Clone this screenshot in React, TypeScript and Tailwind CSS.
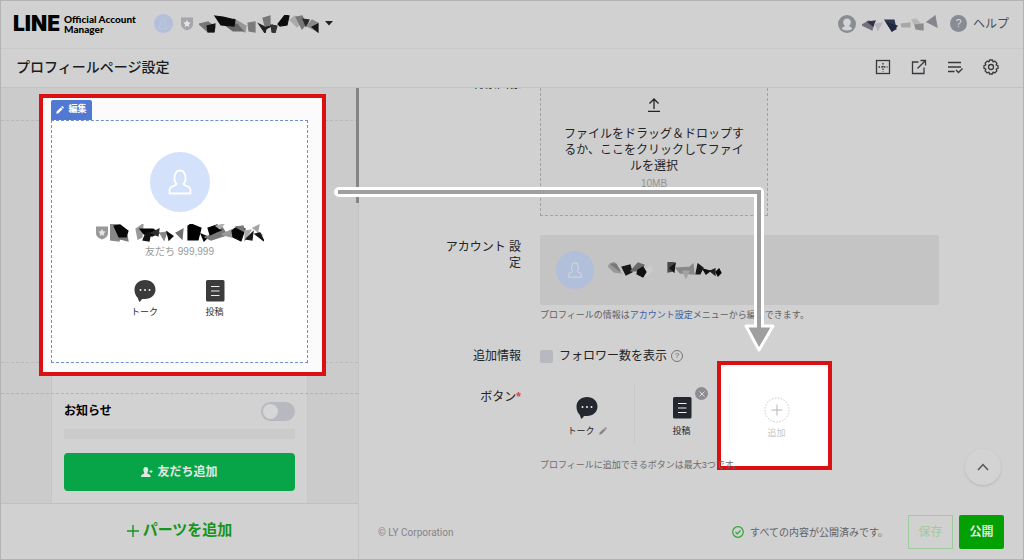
import React from 'react';

interface IconProps {
  className?: string;
}

interface MosaicProps {
  shapes: [string, string][];
  viewBox: string;
  className?: string;
}

interface RowProps {
  label: React.ReactNode;
  className?: string;
  labelClass?: string;
  children: React.ReactNode;
}

const dark = '#0c0c0e';

const headerName: [string, string][] = [
  ['0,9 9,7 16,12 15,17 9,17', '#777'],
  ['9,17 8,11 16,9 15,17', '#151515'],
  ['35,4 37,12 46,17 47,11', '#969696'],
  ['26,10 38,9 44,16 34,16', '#686868'],
  ['16,1 24,2 36,5 35,11 22,10', dark],
  ['49,8 56,7 56,17 50,16', '#7b7b7b'],
  ['60,9 66,12 74,10 67,14 66,18', '#202020'],
  ['64,3 71,1 71,10 66,11', '#777'],
  ['79,9 86,0 90,1 88,10 81,11', dark],
  ['72,10 78,11 76,18 73,17', '#333'],
  ['91,5 96,1 102,8 98,12', '#aaa'],
  ['97,2 103,1 107,9 103,14', '#777'],
  ['104,4 110,5 107,11', '#282828'],
  ['108,11 113,5 119,8 118,16', '#8a8a8a'],
  ['113,12 119,9 119,17', '#181818'],
];

const userName: [string, string][] = [
  ['0,10 7,6 12,8 10,15', '#71717b'],
  ['6,7 13,6 11,11', '#323145'],
  ['13,9 20,8 16,15', '#b5b5bc'],
  ['23,5 32,5 34,14 30,16', '#303651'],
  ['25,8 35,11 30,16', '#20273f'],
  ['39,9 48,8 48,12 40,12', '#a8a8a8'],
  ['50,5 54,4 61,12 53,11', '#b6b6b6'],
  ['53,10 61,9 61,15 54,14', '#8c8c8e'],
  ['65,7 73,1 75,12', '#85858e'],
];

const profileName: [string, string][] = [
  ['0,0 9,1 12,8 9,17 0,16', '#888'],
  ['8,11 17,11 18,17 10,15', '#777'],
  ['4,2 10,1 18,7 16,13 9,13', '#080808'],
  ['26,5 33,0 32,13 28,15', '#999'],
  ['30,5 43,5 49,9 42,12 34,10', '#050505'],
  ['36,9 41,8 39,17 33,16', '#111'],
  ['41,9 49,5 48,12', '#303030'],
  ['50,9 57,8 54,16', '#888'],
  ['57,8 63,12 59,16', dark],
  ['66,9 73,5 72,15', '#717171'],
  ['78,2 81,0 91,4 88,16 78,16', '#000'],
  ['91,10 98,13 94,17', '#050505'],
  ['95,13 107,9 112,3 117,11 101,16', '#777'],
  ['98,4 107,1 111,6 100,11', '#020202'],
  ['106,2 114,0 110,5', '#b0b0b0'],
  ['112,10 126,4 122,13 113,11', '#999'],
  ['122,7 127,3 135,5 131,17 123,13', '#070707'],
  ['126,3 133,2 135,8', '#777'],
  ['135,7 141,6 135,16', '#aaa'],
  ['136,15 143,8 142,16', '#191919'],
  ['143,4 149,1 147,11 152,11', '#a5a5a5'],
  ['145,10 150,9 154,17', '#151515'],
];

const accountName: [string, string][] = [
  ['0,4 6,0 13,11 6,10', '#999'],
  ['3,2 8,2 12,9', '#777'],
  ['14,5 22,3 24,10 18,13', '#171717'],
  ['23,9 30,1 36,3 33,9', '#696969'],
  ['35,10 43,4 44,9 37,15', '#ccc'],
  ['30,8 35,5 38,10 35,15 29,12', '#111'],
  ['60,0 67,1 65,9 60,10', '#484848'],
  ['62,6 67,2 66,10', '#151515'],
  ['68,6 82,5 85,2 86,12 72,11', '#888'],
  ['75,9 81,9 78,16', '#a3a3a3'],
  ['90,2 95,6 92,12 88,12', '#171717'],
  ['95,7 102,9 98,12', '#101010'],
  ['102,9 107,7 107,13', '#202020'],
  ['108,10 111,7 113,11 110,14', '#070707'],
];

function Mosaic({ shapes, viewBox, className }: MosaicProps) {
  return (
    <svg viewBox={viewBox} className={className} aria-hidden="true">
      {shapes.map(([points, fill]) => (
        <polygon key={points} points={points} fill={fill} stroke={fill} strokeWidth="1.2" />
      ))}
    </svg>
  );
}

function PersonIcon({ className }: IconProps) {
  return (
    <svg viewBox="0 0 24 26" className={className} fill="none" stroke="currentColor" strokeWidth="1.8" strokeLinejoin="round">
      <path d="M8.5 15C5 11.500 6 1.500 12 1.500S19 11.500 15.500 15C15 17 22.500 16 22.500 21V24.500H1.500V21C1.500 16 9 17 8.500 15Z" />
    </svg>
  );
}

function ShieldIcon({ className }: IconProps) {
  return (
    <svg viewBox="0 0 13 14" className={className}>
      <path d="M0 0H13V7C13 11 9.500 13 6.500 14C3.500 13 0 11 0 7Z" fill="currentColor" />
      <path d="M6.500 2.500L7.800 5.200 10.500 5.500 8.500 7.500 9 10.200 6.500 9 4 10.200 4.500 7.500 2.500 5.500 5.200 5.200Z" fill="#e5e5e5" />
    </svg>
  );
}

function TalkIcon({ className }: IconProps) {
  return (
    <svg viewBox="0 0 22 22" className={className}>
      <path d="M11 0C17 0 21.500 4 21.500 9.500S17 19 11 19H8.500C7.500 19 7 21 5.500 22C4.500 21 4.500 19 3.500 17.500C1.500 15.500 .5 13 .5 9.500C.5 4 5 0 11 0Z" fill="currentColor" />
      <g fill="#eee">
        <circle cx="6.500" cy="10" r="1" />
        <circle cx="11" cy="10" r="1" />
        <circle cx="15.500" cy="10" r="1" />
      </g>
    </svg>
  );
}

function PostIcon({ className }: IconProps) {
  return (
    <svg viewBox="0 0 22 22" className={className}>
      <rect x="2" y="0" width="18.500" height="21.500" rx="1.500" fill="currentColor" />
      <path d="M7 6.500H15.500M7 11H15.500M7 15.500H15.500" stroke="#eee" strokeWidth="1.200" />
    </svg>
  );
}

function PencilIcon({ className }: IconProps) {
  return (
    <svg viewBox="0 0 10 10" className={className} fill="currentColor">
      <path d="M.8 7L6 1.800 8.200 4 3 9.200.3 9.700ZM6.500 1.300L7.400.4Q8 0 8.600.5L9.500 1.400Q10 2 9.600 2.600L8.700 3.500Z" />
    </svg>
  );
}

function Row({ label, className = '', labelClass = '', children }: RowProps) {
  return (
    <div className={`flex gap-[19px] ${className}`}>
      <div className={`w-20 shrink-0 text-right text-xs leading-4 ${labelClass}`}>{label}</div>
      <div className="min-w-0 flex-1">{children}</div>
    </div>
  );
}

function Header() {
  return (
    <header className="flex h-12 items-center border-b border-[#c9c9c9] pr-3.5 pb-0.5 pl-3">
      <div className="flex items-center gap-1 text-black">
        <span className="font-['Inter'] text-[21px] leading-6 font-black">LINE</span>
        <span className="font-['Lato'] text-[10px] leading-[10px] font-black">
          Official Account
          <br />
          Manager
        </span>
      </div>
      <button type="button" aria-label="アカウント" className="ml-[18px] flex items-center">
        <span className="flex size-[19px] items-center justify-center rounded-full bg-[#b3bfdb]">
          <PersonIcon className="h-2.5 w-3 text-[#c3cde0]" />
        </span>
        <ShieldIcon className="ml-2 h-3.5 w-3 text-[#a6a6aa]" />
        <Mosaic shapes={headerName} viewBox="0 0 120 18" className="ml-1.5 h-[18px] w-[120px]" />
        <svg viewBox="0 0 8 5" className="ml-1.5 h-[5px] w-2">
          <path d="M0 0H8L4 4.500Z" fill="#222" />
        </svg>
      </button>
      <div className="ml-auto flex items-center">
        <svg viewBox="0 0 18 18" className="size-[18px]">
          <circle cx="9" cy="9" r="9" fill="#8a8d91" />
          <path d="M7 11C3.500 7.500 5.500 3.500 9 3.500S14.500 7.500 11 11C11.500 12 14.500 12 14 14Q9 17 4 14C3.500 12 6.500 12 7 11Z" fill="#d4d4d4" />
        </svg>
        <Mosaic shapes={userName} viewBox="0 0 76 18" className="ml-1.5 h-[18px] w-[76px]" />
        <a href="#help" className="ml-3 flex items-center gap-1.5 text-xs text-[#4e4e52]">
          <span className="flex size-[17px] items-center justify-center rounded-full bg-[#898b94] text-[11px] text-[#d8d8d8]">?</span>
          ヘルプ
        </a>
      </div>
    </header>
  );
}

function TitleBar() {
  return (
    <div className="flex h-[39px] items-center border-b border-[#c2c2c2] pr-6 pb-0.5 pl-[15px]">
      <h1 className="text-sm leading-5 font-medium text-[#1c1c1e]">プロフィールページ設定</h1>
      <div className="ml-auto flex items-center gap-5 text-[#36383c]">
        <button type="button" aria-label="グリッド">
          <svg viewBox="0 0 16 16" className="size-4" fill="none" stroke="currentColor" strokeWidth="1.300">
            <rect x="1.500" y="1.500" width="13" height="13" />
            <path d="M8 4V12.500M3.500 8H12.500" strokeDasharray="1.500 1.200" />
          </svg>
        </button>
        <button type="button" aria-label="開く">
          <svg viewBox="0 0 16 16" className="size-4" fill="none" stroke="currentColor" strokeWidth="1.300">
            <path d="M7.500 3H1.500V14.500H13V8.500M6.500 9.500L14 2M9.500 1.500H14.500V6.500" />
          </svg>
        </button>
        <button type="button" aria-label="リスト">
          <svg viewBox="0 0 16 16" className="size-4" fill="none" stroke="currentColor" strokeWidth="1.300">
            <path d="M1 3.500H14M1 8H14M1 12.500H7.500M9 11L11.500 13.500L15.500 9.500" />
          </svg>
        </button>
        <button type="button" aria-label="設定">
          <svg viewBox="0 0 16 16" className="size-4" fill="none" stroke="currentColor" strokeWidth="1.300" strokeLinejoin="round">
            <path d="M6.500 1H9.500L10 2.900L12 2.200L13.900 4.100L13.100 6L15 6.600V9.400L13.100 10L13.900 11.900L12 13.800L10 13.100L9.500 15H6.500L6 13.100L4 13.800L2.100 11.900L2.900 10L1 9.400V6.600L2.900 6L2.100 4.100L4 2.200L6 2.900Z" />
            <circle cx="8" cy="8" r="2.500" />
          </svg>
        </button>
      </div>
    </div>
  );
}

function ProfileCard() {
  return (
    <div className="relative mx-[38px] w-[287px] border-4 border-[#dc0f12] bg-[#fbfbfb] pt-0.5 pr-[14px] pb-[9px] pl-2">
      <button type="button" className="flex h-5 w-[41px] items-center justify-center gap-1 rounded-t-xs bg-[#5179d4] text-[9px] font-bold text-white">
        <PencilIcon className="size-2" />
        編集
      </button>
      <div className="flex h-[243px] flex-col items-center border border-dashed border-[#6d8fce] bg-white pt-[31px]">
        <span className="flex size-[60px] items-center justify-center rounded-full bg-[#d3e1fb]">
          <PersonIcon className="h-[26px] w-6 text-white" />
        </span>
        <div className="mt-3 flex items-center gap-0.5">
          <ShieldIcon className="h-3.5 w-3 text-[#999]" />
          <Mosaic shapes={profileName} viewBox="0 0 154 18" className="h-[18px] w-[154px]" />
        </div>
        <p className="mt-0.5 text-[10px] leading-4 text-[#999]">友だち 999,999</p>
        <div className="mt-5 flex justify-center text-[9px] leading-3 text-[#2c2c2e]">
          <a href="#talk" className="flex w-[70px] flex-col items-center gap-1">
            <TalkIcon className="size-[22px] text-[#3b3b3b]" />
            トーク
          </a>
          <a href="#post" className="flex w-[70px] flex-col items-center gap-1">
            <PostIcon className="size-[22px] text-[#3b3b3b]" />
            投稿
          </a>
        </div>
      </div>
    </div>
  );
}

function Preview() {
  return (
    <aside className="relative flex w-[358px] shrink-0 flex-col border-r border-[#c4c4c4]">
      <div className="relative flex flex-1 flex-col bg-[#cbcbcb] pt-1.5">
        <div className="absolute inset-x-0 top-8 border-t border-dashed border-[#b8b8b8]" />
        <div className="absolute inset-x-0 top-[274px] border-t border-dashed border-[#bababa]" />
        <ProfileCard />
        <div className="mx-[50px] flex flex-1 flex-col border-x border-[#c6c6c6] bg-[#d2d2d2] px-3">
          <label className="mt-[23px] flex h-6 items-center justify-between text-xs font-bold text-black">
            お知らせ
            <input type="checkbox" className="peer sr-only" />
            <span className="flex h-[19px] w-[34px] items-center rounded-full bg-[#b8b8c0] px-0.5">
              <span className="size-[15px] rounded-full bg-[#d6d6d6]" />
            </span>
          </label>
          <div className="mt-1.5 h-2.5 bg-[#cbcbcb]" />
          <button type="button" className="mt-3.5 flex h-[38px] items-center justify-center gap-1 rounded-sm bg-[#08a548] text-xs font-bold text-[#e2e9e2]">
            <svg viewBox="0 0 12 12" className="size-3" fill="currentColor">
              <path d="M4.800 1C6.800 1 7.800 3 7 5C6.500 6.500 6.200 7 6.300 7.500L8.800 8.800Q9.600 9.300 9.600 11H0Q0 9.300 .8 8.800L3.300 7.500C3.400 7 3.100 6.500 2.600 5C1.800 3 2.800 1 4.800 1Z" />
              <path d="M10 4V7M8.500 5.500H11.500" stroke="currentColor" strokeWidth="1" />
            </svg>
            友だち追加
          </button>
        </div>
        <div className="absolute inset-x-0 top-[305px] border-t border-dashed border-[#b3b3b3]" />
      </div>
      <button type="button" className="flex h-14 items-center justify-center gap-1 border-t border-[#c0c0c0] pb-0.5 text-[15px] font-bold text-[#15951a]">
        <svg viewBox="0 0 12 12" className="size-3" stroke="currentColor" strokeWidth="1.400">
          <path d="M6 0V12M0 6H12" />
        </svg>
        パーツを追加
      </button>
      <div className="absolute top-0 -right-px h-[115px] w-[3px] bg-[#858585]" />
    </aside>
  );
}

function ButtonSlots() {
  return (
    <div className="flex h-[58px] text-[9px] leading-3 text-[#1f2024]">
      <button type="button" className="flex w-[95px] flex-col items-center gap-1.5 border-r border-[#c8c8c8] pt-3">
        <TalkIcon className="size-[22px] text-[#24272d]" />
        <span className="flex items-center gap-1">
          トーク
          <PencilIcon className="size-2 text-[#888]" />
        </span>
      </button>
      <div className="relative flex w-[94px] flex-col items-center border-r border-[#c8c8c8] pt-3">
        <PostIcon className="size-[22px] text-[#24272d]" />
        <span className="mt-1.5">投稿</span>
        <button type="button" aria-label="削除" className="absolute top-0.5 right-5 flex size-[13px] items-center justify-center rounded-full bg-[#8d8d91]">
          <svg viewBox="0 0 6 6" className="size-1.5" stroke="#ddd" strokeWidth="1">
            <path d="M.5 .5L5.500 5.500M5.500 .5L.5 5.500" />
          </svg>
        </button>
      </div>
      <div className="relative w-[95px]">
        <button type="button" className="absolute -top-6 -left-3 flex h-[109px] w-[115px] flex-col items-center border-4 border-[#dc0f12] bg-white pt-8 pl-1 text-[#c8c8c8]">
          <svg viewBox="0 0 26 26" className="size-[26px]" fill="none" stroke="#c6c6c6">
            <circle cx="13" cy="13" r="12" strokeDasharray="1.500 1.500" />
            <path d="M13 7.500V18.500M7.500 13H18.500" stroke="#b5b5b5" />
          </svg>
          <span className="mt-1">追加</span>
          <span className="absolute top-5 left-2 h-[58px] border-l border-[#f3f3f3]" />
        </button>
      </div>
    </div>
  );
}

function Settings() {
  return (
    <main className="relative flex min-w-0 flex-1 flex-col overflow-hidden pr-[84px] pl-[82px] text-[#222326]">
      <Row label="背景画像" labelClass="-mt-3">
        <div className="flex h-32 w-[228px] flex-col items-center border border-t-0 border-dashed border-[#a3a3a3] bg-[#cecece] px-5 pt-2.5 text-center text-xs leading-4">
          <svg viewBox="0 0 14 14" className="size-3.5 shrink-0" fill="none" stroke="currentColor" strokeWidth="1.300">
            <path d="M7 11V1M2.500 5.500L7 1L11.500 5.500M1 13.300H13" />
          </svg>
          <p className="mt-3.5 w-[180px]">ファイルをドラッグ＆ドロップするか、ここをクリックしてファイルを選択</p>
          <p className="mt-0.5 text-[10px] text-[#929292]">10MB</p>
        </div>
      </Row>
      <Row label="アカウント 設定" className="mt-[19px]" labelClass="pt-1">
        <div className="flex h-[70px] items-center rounded-xs bg-[#c4c4c4] pl-4">
          <span className="flex size-[38px] items-center justify-center rounded-full bg-[#b1bfda]">
            <PersonIcon className="h-4 w-4 text-[#ccd3dd]" />
          </span>
          <Mosaic shapes={accountName} viewBox="0 0 114 17" className="ml-3.5 h-[17px] w-[114px]" />
        </div>
        <p className="mt-0.5 text-[9px] leading-4 text-[#606064]">
          プロフィールの情報は
          <a href="#account" className="text-[#3b5da6]">アカウント設定</a>
          メニューから編集できます。
        </p>
      </Row>
      <Row label="追加情報" className="mt-[25px]">
        <div className="flex items-center gap-1">
          <label className="flex items-center gap-1.5 text-xs leading-4">
            <input type="checkbox" className="size-[13px] appearance-none rounded-xs bg-[#b8b8c0]" />
            フォロワー数を表示
          </label>
          <span className="flex size-3 items-center justify-center rounded-full border border-[#777] text-[8px] leading-3 text-[#666]">?</span>
        </div>
      </Row>
      <Row
        label={
          <>
            ボタン<span className="font-bold text-[#d84848]">*</span>
          </>
        }
        className="mt-[21px]"
        labelClass="pt-1"
      >
        <ButtonSlots />
        <p className="relative mt-3.5 text-[9px] leading-4 text-[#6b6b6e]">プロフィールに追加できるボタンは最大3つです。</p>
      </Row>
      <button type="button" aria-label="上へ" className="absolute right-[22px] bottom-[74px] flex size-9 items-center justify-center rounded-full bg-[#d3d3d3] shadow">
        <svg viewBox="0 0 12 8" className="h-2 w-3" fill="none" stroke="#555" strokeWidth="1.500">
          <path d="M1 7L6 1.500L11 7" />
        </svg>
      </button>
      <footer className="mt-auto -mr-[65px] mb-2.5 -ml-[63px] flex h-[34px] items-center text-[10px] text-[#616166]">
        <span className="font-['Roboto'] text-[#85858a]">© LY Corporation</span>
        <svg viewBox="0 0 12 12" className="ml-auto size-3" fill="none" stroke="#2fa535" strokeWidth="1.200">
          <circle cx="6" cy="6" r="5.300" />
          <path d="M3.500 6L5.300 7.800L8.500 4.500" />
        </svg>
        <span className="ml-1.5">すべての内容が公開済みです。</span>
        <button type="button" disabled className="ml-5 h-[34px] w-[45px] border border-[#9ccb9c] text-xs text-[#9ccb9c]">保存</button>
        <button type="button" className="ml-1.5 h-[34px] w-[45px] rounded-xs bg-[#03a003] text-xs font-bold text-[#dfe9df]">公開</button>
      </footer>
    </main>
  );
}

// Guide line from the profile card to the empty button slot
function Arrow() {
  return (
    <svg viewBox="0 0 444 168" className="pointer-events-none absolute top-[185px] left-[332px] h-[168px] w-[444px]" fill="none">
      <path d="M6 6H426V142" stroke="#fff" strokeWidth="10" strokeLinecap="round" strokeLinejoin="round" />
      <path d="M413 140H440L426 164Z" fill="#9f9f9f" stroke="#fff" strokeWidth="3" strokeLinejoin="round" />
      <path d="M5 6H426V145" stroke="#9f9f9f" strokeWidth="4" />
    </svg>
  );
}

export default function App() {
  return (
    <div className="relative flex min-h-screen flex-col border border-[#b3b3b3] bg-[#d1d1d1] font-['Liberation_Sans','Noto_Sans_CJK_JP',sans-serif]">
      <Header />
      <TitleBar />
      <div className="flex flex-1">
        <Preview />
        <Settings />
      </div>
      <Arrow />
    </div>
  );
}
